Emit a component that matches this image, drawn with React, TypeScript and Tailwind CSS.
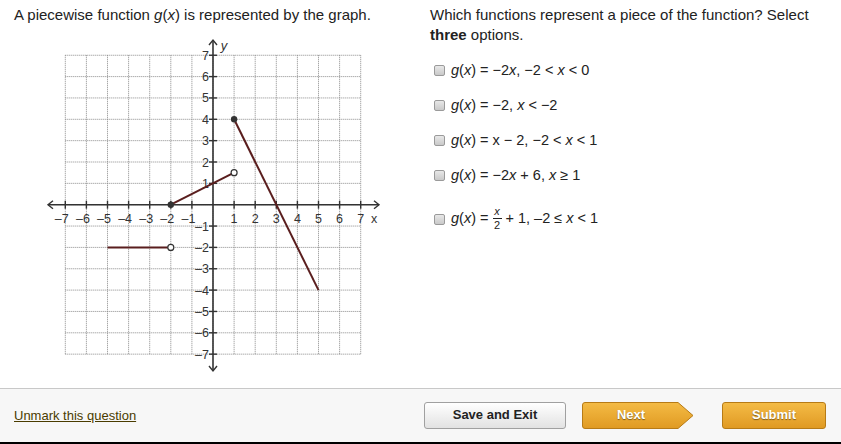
import React from 'react';

const OX = 213;
const OY = 204.7;
const SX = 21.1;
const SY = 21.35;
const X = (i: number) => OX + SX * i;
const Y = (j: number) => OY - SY * j;
const range = Array.from({ length: 15 }, (_, k) => k - 7);
const INK = '#5a1e1e';
const AXIS = '#333';

const Graph = () => (
  <svg width={350} height={342} viewBox="40 36 350 342" className="block" style={{ fontFamily: '"Liberation Sans", Arial, sans-serif' }}>
    {/* dotted grid */}
    {range.map((i) => (
      <line key={'v' + i} x1={X(i)} y1={Y(7)} x2={X(i)} y2={Y(-7)} stroke="#8a8a8a" strokeWidth={1} strokeDasharray="1 1" />
    ))}
    {range.map((j) => (
      <line key={'h' + j} x1={X(-7)} y1={Y(j)} x2={X(7)} y2={Y(j)} stroke="#8a8a8a" strokeWidth={1} strokeDasharray="1 1" />
    ))}

    {/* axes */}
    <line x1={48} y1={OY} x2={379} y2={OY} stroke={AXIS} strokeWidth={1.6} />
    <line x1={OX} y1={40} x2={OX} y2={371} stroke={AXIS} strokeWidth={1.6} />
    <polyline points={`53,${OY - 4} 48,${OY} 53,${OY + 4}`} fill="none" stroke={AXIS} strokeWidth={1.4} />
    <polyline points={`374,${OY - 4} 379,${OY} 374,${OY + 4}`} fill="none" stroke={AXIS} strokeWidth={1.4} />
    <polyline points={`${OX - 4},45 ${OX},40 ${OX + 4},45`} fill="none" stroke={AXIS} strokeWidth={1.4} />
    <polyline points={`${OX - 4},366 ${OX},371 ${OX + 4},366`} fill="none" stroke={AXIS} strokeWidth={1.4} />

    {/* ticks */}
    {range.filter((i) => i !== 0).map((i) => (
      <line key={'tx' + i} x1={X(i)} y1={OY - 4} x2={X(i)} y2={OY + 4} stroke={AXIS} strokeWidth={1.4} />
    ))}
    {range.filter((j) => j !== 0).map((j) => (
      <line key={'ty' + j} x1={OX - 4} y1={Y(j)} x2={OX + 4} y2={Y(j)} stroke={AXIS} strokeWidth={1.4} />
    ))}

    {/* labels */}
    {range.filter((i) => i !== 0).map((i) => (
      <text key={'lx' + i} x={i < 0 ? X(i) - 3.5 : X(i)} y={223} fontSize={12.5} fill="#333" textAnchor="middle">
        {i < 0 ? '–' + -i : i}
      </text>
    ))}
    {range.filter((j) => j !== 0).map((j) => (
      <text key={'ly' + j} x={209} y={Y(j) + 4.5} fontSize={12.5} fill="#333" textAnchor="end">
        {j < 0 ? '–' + -j : j}
      </text>
    ))}
    <text x={374} y={223} fontSize={12.5} fill="#333" textAnchor="middle">x</text>
    <text x={224} y={50} fontSize={13} fill="#333" fontStyle="italic" textAnchor="middle">y</text>

    {/* pieces */}
    <line x1={X(-5)} y1={Y(-2)} x2={X(-2)} y2={Y(-2)} stroke={INK} strokeWidth={2} />
    <line x1={X(-2)} y1={Y(0)} x2={X(1)} y2={Y(1.5)} stroke={INK} strokeWidth={2} />
    <line x1={X(1)} y1={Y(4)} x2={X(5)} y2={Y(-4)} stroke={INK} strokeWidth={2} />
    <circle cx={X(-2)} cy={Y(-2)} r={3} fill="#fff" stroke="#333" strokeWidth={1.2} />
    <circle cx={X(-2)} cy={Y(0)} r={3.2} fill="#333" />
    <circle cx={X(1)} cy={Y(1.5)} r={3} fill="#fff" stroke="#333" strokeWidth={1.2} />
    <circle cx={X(1)} cy={Y(4)} r={3.2} fill="#333" />
  </svg>
);

const Box = () => (
  <span className="inline-block w-[11px] h-[11px] rounded-[2px] border border-[#9a9a9a] bg-gradient-to-b from-[#e8e8e8] to-[#c9c9c9] shrink-0" />
);

const V = ({ children }: { children: React.ReactNode }) => <i>{children}</i>;

const Option = ({ children }: { children: React.ReactNode }) => (
  <div className="flex items-center gap-[6px] pl-[4px] leading-[20px]">
    <Box />
    <span>{children}</span>
  </div>
);

const Fraction = () => (
  <span className="inline-flex flex-col items-center align-middle leading-none text-[11px] mx-[4px] -translate-y-[1px]">
    <i className="pb-[1px]">x</i>
    <span className="w-[9px] border-t border-[#222]" />
    <span className="pt-[1px]">2</span>
  </span>
);

export default function App() {
  return (
    <div className="w-[841px] h-[444px] bg-white text-[#222] flex flex-col overflow-hidden" style={{ fontFamily: '"Liberation Sans", Arial, sans-serif' }}>
      <div className="h-[388px] flex">
        <div className="w-[416px] pl-[14px] pt-[5px]">
          <p className="text-[15px] leading-[20px] whitespace-nowrap">
            A piecewise function <V>g</V>(<V>x</V>) is represented by the graph.
          </p>
          <div className="mt-[11px] ml-[26px]">
            <Graph />
          </div>
        </div>
        <div className="flex-1 pl-[14px] pt-[5px]">
          <p className="text-[15px] leading-[20px] w-[392px]">
            Which functions represent a piece of the function? Select <b>three</b> options.
          </p>
          <div className="mt-[15px] flex flex-col gap-[15px] text-[14.5px]">
            <Option><V>g</V>(<V>x</V>) = −2<V>x</V>, −2 &lt; <V>x</V> &lt; 0</Option>
            <Option><V>g</V>(<V>x</V>) = −2, <V>x</V> &lt; −2</Option>
            <Option><V>g</V>(<V>x</V>) = x − 2, −2 &lt; <V>x</V> &lt; 1</Option>
            <Option><V>g</V>(<V>x</V>) = −2<V>x</V> + 6, <V>x</V> ≥ 1</Option>
            <div className="mt-[7px]">
              <Option><V>g</V>(<V>x</V>) =<Fraction />+ 1, –2 ≤ <V>x</V> &lt; 1</Option>
            </div>
          </div>
        </div>
      </div>

      <div className="h-[54px] border-t border-[#c8c8c8] bg-[#f7f7f7] flex items-center pl-[14px] pr-[15px]">
        <a href="#" className="text-[13px] text-[#4a3c00] underline mt-[1px]">Unmark this question</a>
        <div className="ml-auto flex items-center -mt-[1px]">
          <button className="w-[142px] h-[27px] rounded-[3px] border border-[#a0a0a0] bg-gradient-to-b from-white to-[#e2e2e2] text-[13px] font-bold text-[#222]">
            Save and Exit
          </button>
          <button className="relative ml-[16px] w-[112px] h-[27px] text-[13px] font-bold text-white [text-shadow:0_1px_1px_rgba(0,0,0,0.45)]">
            <svg className="absolute inset-0" width={112} height={27} viewBox="0 0 112 27">
              <defs>
                <linearGradient id="ng" x1="0" y1="0" x2="0" y2="1">
                  <stop offset="0" stopColor="#f4bb45" />
                  <stop offset="1" stopColor="#e09a22" />
                </linearGradient>
              </defs>
              <path d="M3 0.5 H96 L111 13.5 L96 26.5 H3 Q0.5 26.5 0.5 24 V3 Q0.5 0.5 3 0.5 Z" fill="url(#ng)" stroke="#b77b16" strokeWidth={1} />
            </svg>
            <span className="relative pr-[14px]">Next</span>
          </button>
          <button className="ml-[28px] w-[104px] h-[27px] rounded-[3px] border border-[#b77b16] bg-gradient-to-b from-[#f4bb45] to-[#e09a22] text-[13px] font-bold text-white [text-shadow:0_1px_1px_rgba(0,0,0,0.45)]">
            Submit
          </button>
        </div>
      </div>
      <div className="h-[2px] bg-black" />
    </div>
  );
}
